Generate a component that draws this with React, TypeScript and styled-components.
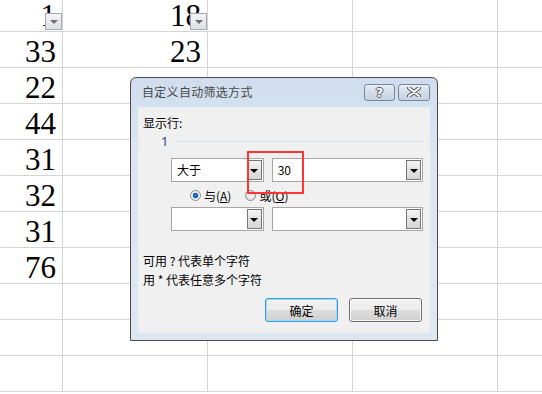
import React from "react";
import styled, { createGlobalStyle } from "styled-components";

const GlobalStyle = createGlobalStyle`
  html, body {
    margin: 0;
    padding: 0;
    background: #ffffff;
    overflow: hidden;
  }
`;

const UI_FONT = `"Noto Sans CJK SC", "Noto Sans", sans-serif`;

const Page = styled.div`
  position: relative;
  width: 542px;
  height: 394px;
  overflow: hidden;
  background: #fff;
`;

const Row = styled.div<{ $first?: boolean }>`
  display: grid;
  grid-template-columns: 63px 145px 145px 145px 145px;
  height: ${(p) => (p.$first ? 32 : 36)}px;
  box-sizing: border-box;
  border-bottom: 1px solid #d4d4d4;
`;

const Cell = styled.div`
  position: relative;
  display: flex;
  justify-content: flex-end;
  align-items: flex-end;
  box-sizing: border-box;
  border-right: 1px solid #d4d4d4;
  padding-right: 6px;
  font-family: "Liberation Serif", "Times New Roman", serif;
  font-size: 31px;
  line-height: 31px;
  color: #000;
  overflow: visible;
`;

const FilterBtn = styled.div`
  position: absolute;
  right: 0;
  bottom: 1px;
  width: 17px;
  height: 17px;
  box-sizing: border-box;
  border: 1px solid #a3a9b3;
  background: linear-gradient(#f4f5f7, #dcdfe5);
  display: flex;
  align-items: center;
  justify-content: center;

  &::after {
    content: "";
    width: 0;
    height: 0;
    border-left: 4px solid transparent;
    border-right: 4px solid transparent;
    border-top: 4px solid #6e6e6e;
    margin-top: 1px;
  }
`;

const Dialog = styled.div`
  position: absolute;
  left: 130px;
  top: 77px;
  width: 308px;
  height: 264px;
  box-sizing: border-box;
  border: 1px solid #4b4b4b;
  border-radius: 6px 6px 0 0;
  background: linear-gradient(#cfddee, #dbe6f2 30%, #dce7f2);
  padding: 0 7px 7px 7px;
  display: flex;
  flex-direction: column;
  font-family: ${UI_FONT};
`;

const TitleBar = styled.div`
  height: 29px;
  display: flex;
  align-items: center;
  padding-left: 4px;
`;

const TitleText = styled.div`
  flex: 1;
  font-size: 12px;
  color: #4a4a4a;
  letter-spacing: 0.3px;
  margin-top: -2px;
`;

const CaptionBtn = styled.div<{ $w: number }>`
  width: ${(p) => p.$w}px;
  height: 17px;
  box-sizing: border-box;
  border: 1px solid #7a8696;
  border-radius: 3px;
  background: linear-gradient(#e6edf5, #d2dcea 50%, #c5d2e3);
  display: flex;
  align-items: center;
  justify-content: center;
  margin-left: 3px;
  margin-top: -1px;
  font-family: "DejaVu Sans", sans-serif;
  font-weight: bold;
  font-size: 13px;
  color: #fff;
  text-shadow: -1px 0 #555, 1px 0 #555, 0 -1px #555, 0 1px #555;
`;

const Client = styled.div`
  position: relative;
  flex: 1;
  background: #f0f0f0;
  border-top: 1px solid #e8eef5;
  padding: 7px 7px 0 5px;
  display: flex;
  flex-direction: column;
  font-size: 12px;
  color: #000;
`;

const Label = styled.div`
  height: 16px;
  line-height: 16px;
`;

const GroupHead = styled.div`
  display: flex;
  align-items: center;
  height: 16px;
  margin-top: 2px;
  padding-left: 18px;
  gap: 9px;
  font-family: "Noto Sans", sans-serif;
  font-size: 13px;
  color: #1a4a96;
`;

const GroupLine = styled.div`
  flex: 1;
  height: 1px;
  background: #d5dfe8;
`;

const FieldRow = styled.div<{ $top: number }>`
  display: flex;
  gap: 8px;
  margin-top: ${(p) => p.$top}px;
  padding-left: 28px;
`;

const Combo = styled.div<{ $w: number }>`
  width: ${(p) => p.$w}px;
  height: 24px;
  box-sizing: border-box;
  border: 1px solid #a6a6a6;
  background: #fff;
  display: flex;
  align-items: center;
  padding: 1px;
`;

const ComboText = styled.div`
  flex: 1;
  padding-left: 4px;
  font-size: 12px;
  line-height: 20px;
`;

const DropBtn = styled.div`
  width: 15px;
  height: 20px;
  box-sizing: border-box;
  border: 1px solid #767676;
  background: linear-gradient(#f4f4f4, #e2e2e2 50%, #d6d6d6);
  display: flex;
  align-items: center;
  justify-content: center;

  &::after {
    content: "";
    border-left: 4px solid transparent;
    border-right: 4px solid transparent;
    border-top: 4px solid #000;
    margin-top: 1px;
  }
`;

const RadioRow = styled.div`
  display: flex;
  align-items: center;
  height: 14px;
  margin-top: 6px;
  padding-left: 47px;
`;

const RadioItem = styled.div<{ $gap: number }>`
  display: flex;
  align-items: center;
  gap: 3px;
  margin-right: ${(p) => p.$gap}px;
`;

const RadioDot = styled.div<{ $on?: boolean }>`
  width: 11px;
  height: 11px;
  box-sizing: border-box;
  border-radius: 50%;
  border: 1px solid #8a8c8e;
  background: ${(p) =>
    p.$on
      ? "radial-gradient(circle, #2f7bd6 0, #1a57a8 2.5px, #dbe4ee 3px, #f6f8fa 5px)"
      : "radial-gradient(circle, #f8f8f8 0, #dcdfe3 5px)"};
`;

const Hint = styled.div<{ $top: number }>`
  height: 16px;
  line-height: 16px;
  margin-top: ${(p) => p.$top}px;
`;

const ButtonRow = styled.div`
  display: flex;
  justify-content: flex-end;
  gap: 11px;
  margin-top: 10px;
  padding-right: 1px;
`;

const PushBtn = styled.div<{ $focus?: boolean }>`
  width: 73px;
  height: 24px;
  box-sizing: border-box;
  border: 1px solid ${(p) => (p.$focus ? "#3a9bd8" : "#707070")};
  border-radius: 3px;
  box-shadow: ${(p) => (p.$focus ? "inset 0 0 0 1px #9fdcf5" : "inset 0 0 0 1px #f8f8f8")};
  background: linear-gradient(#f2f2f2, #ebebeb 50%, #dddddd 51%, #cfcfcf);
  display: flex;
  align-items: center;
  justify-content: center;
  font-size: 12px;
`;

const Callout = styled.div`
  position: absolute;
  left: 109px;
  top: 43px;
  width: 57px;
  height: 43px;
  box-sizing: border-box;
  border: 2px solid #ff3535;
`;

const rows: [string, string][] = [
  ["33", "23"],
  ["22", ""],
  ["44", ""],
  ["31", ""],
  ["32", ""],
  ["31", ""],
  ["76", ""],
  ["", ""],
  ["", ""],
  ["", ""],
];

export default function App() {
  return (
    <Page>
      <GlobalStyle />
      <Row $first>
        <Cell>
          1<FilterBtn />
        </Cell>
        <Cell>
          18<FilterBtn />
        </Cell>
        <Cell />
        <Cell />
        <Cell />
      </Row>
      {rows.map(([a, b], i) => (
        <Row key={i}>
          <Cell>{a}</Cell>
          <Cell>{b}</Cell>
          <Cell />
          <Cell />
          <Cell />
        </Row>
      ))}

      <Dialog>
        <TitleBar>
          <TitleText>自定义自动筛选方式</TitleText>
          <CaptionBtn $w={31}>?</CaptionBtn>
          <CaptionBtn $w={32}>
            <svg width="14" height="10" viewBox="0 0 14 10">
              <path
                d="M2 1 L12 9 M12 1 L2 9"
                stroke="#555"
                strokeWidth="4"
                strokeLinecap="round"
              />
              <path
                d="M2 1 L12 9 M12 1 L2 9"
                stroke="#fff"
                strokeWidth="2"
                strokeLinecap="round"
              />
            </svg>
          </CaptionBtn>
        </TitleBar>
        <Client>
          <Label>显示行:</Label>
          <GroupHead>
            <span>1</span>
            <GroupLine />
          </GroupHead>
          <FieldRow $top={9}>
            <Combo $w={93}>
              <ComboText>大于</ComboText>
              <DropBtn />
            </Combo>
            <Combo $w={152}>
              <ComboText>30</ComboText>
              <DropBtn />
            </Combo>
          </FieldRow>
          <RadioRow>
            <RadioItem $gap={14}>
              <RadioDot $on />
              <span>
                与(<u>A</u>)
              </span>
            </RadioItem>
            <RadioItem $gap={0}>
              <RadioDot />
              <span>
                或(<u>O</u>)
              </span>
            </RadioItem>
          </RadioRow>
          <FieldRow $top={5}>
            <Combo $w={93}>
              <ComboText />
              <DropBtn />
            </Combo>
            <Combo $w={152}>
              <ComboText />
              <DropBtn />
            </Combo>
          </FieldRow>
          <Hint $top={22}>可用 ? 代表单个字符</Hint>
          <Hint $top={3}>用 * 代表任意多个字符</Hint>
          <ButtonRow>
            <PushBtn $focus>确定</PushBtn>
            <PushBtn>取消</PushBtn>
          </ButtonRow>
          <Callout />
        </Client>
      </Dialog>
    </Page>
  );
}
